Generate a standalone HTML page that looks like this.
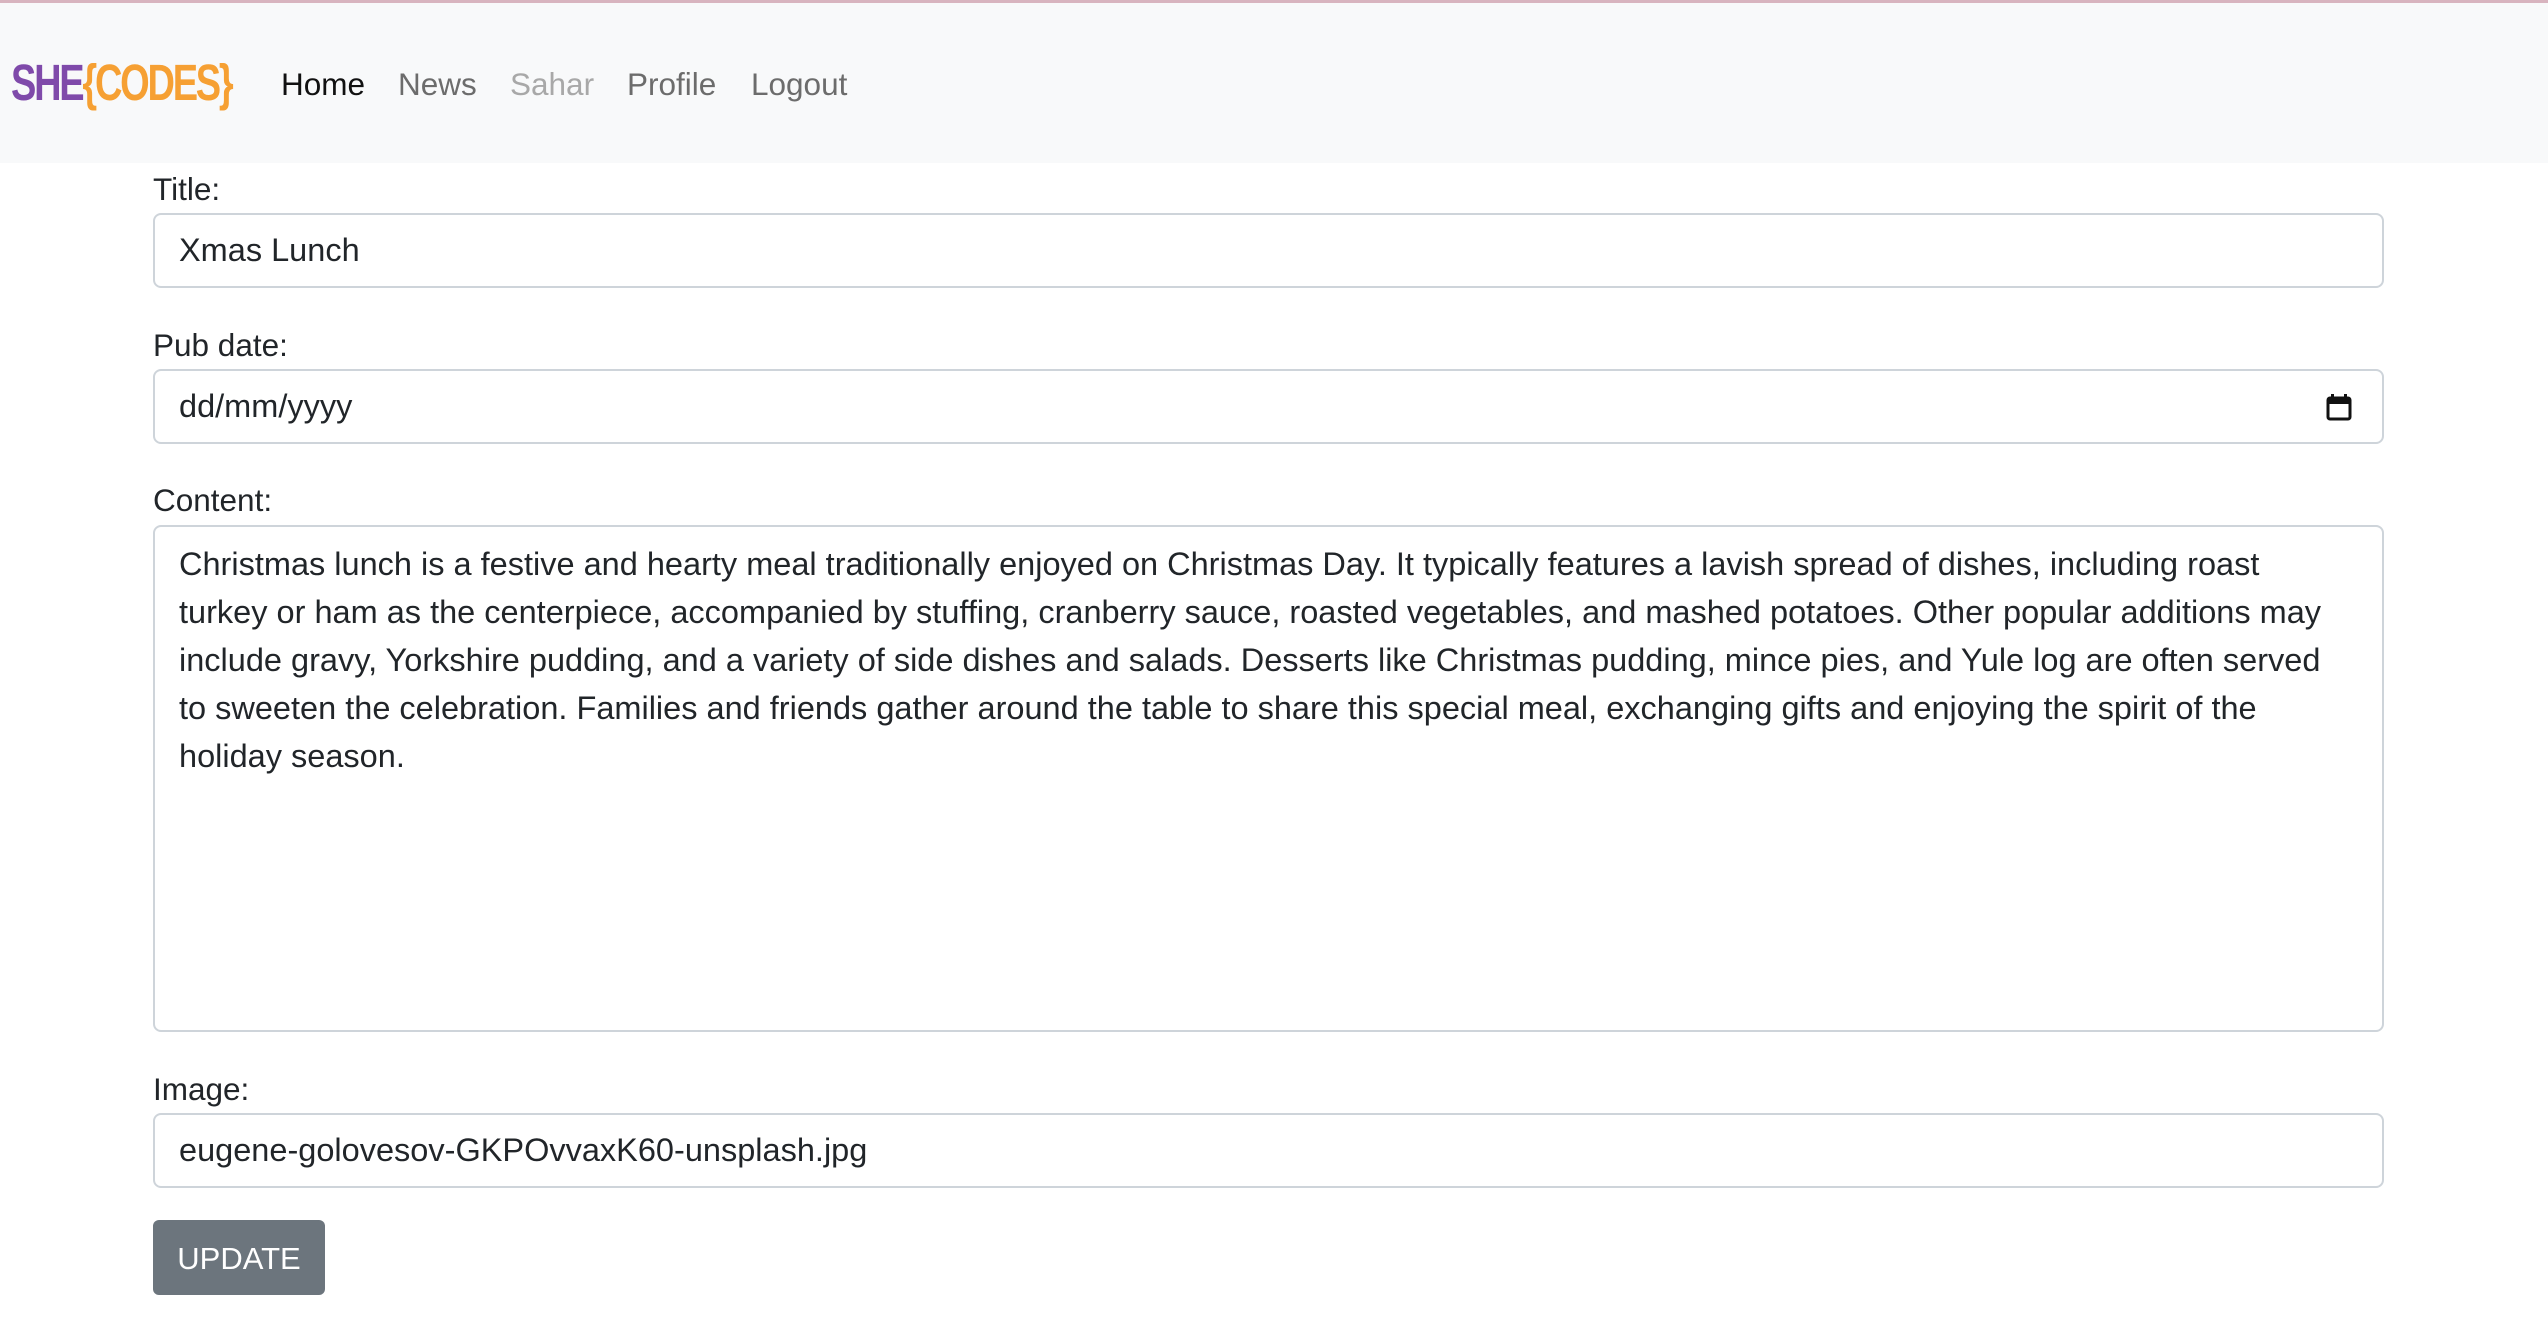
<!DOCTYPE html>
<html><head><meta charset="utf-8"><style>
*{box-sizing:border-box;margin:0;padding:0}
body{width:2548px;height:1322px;background:#fff;font-family:"Liberation Sans",sans-serif;color:#212529;position:relative;overflow:hidden}
.top{position:absolute;left:0;top:0;width:2548px;height:3px;background:#d8b4bf}
.nav{position:absolute;left:0;top:3px;width:2548px;height:160px;background:#f8f9fa}
.logo{position:absolute;left:11px;top:50px;font-family:"Liberation Sans",sans-serif;font-weight:bold;font-size:51px;letter-spacing:-3px;transform:scaleX(0.745);transform-origin:left top;white-space:nowrap}
.logo .p{color:#7f4aaa}.logo .o{color:#f6a033}
.ni{position:absolute;top:63px;font-size:31.5px;color:#6c6c6c;white-space:nowrap}
.lbl{position:absolute;left:153px;font-size:31.5px;white-space:nowrap}
.inp{position:absolute;left:153px;width:2231px;border:2px solid #ced4da;border-radius:8px;background:#fff;font-size:32.5px;padding-left:24px;white-space:nowrap}
.btn{position:absolute;left:153px;top:1220px;width:172px;height:75px;background:#6c757d;border-radius:6px;color:#fff;font-size:31px;line-height:77px;text-align:center}
</style></head><body>
<div class="top"></div>
<div class="nav">
<div class="logo"><span class="p">SHE</span><span class="o">{CODES}</span></div>
<span class="ni" style="left:281px;color:#111">Home</span>
<span class="ni" style="left:398px">News</span>
<span class="ni" style="left:510px;color:#a8a8a8">Sahar</span>
<span class="ni" style="left:627px">Profile</span>
<span class="ni" style="left:751px">Logout</span>
</div>
<div class="lbl" style="top:171px">Title:</div>
<div class="inp" style="top:213px;height:75px;line-height:71px">Xmas Lunch</div>
<div class="lbl" style="top:327px">Pub date:</div>
<div class="inp" style="top:369px;height:75px;line-height:71px">dd/mm/yyyy
<svg style="position:absolute;right:30px;top:22px" width="26" height="28" viewBox="0 0 26 28"><rect x="2" y="5" width="22" height="21" rx="2" fill="none" stroke="#111" stroke-width="3"/><rect x="2" y="5" width="22" height="6" fill="#111"/><rect x="5" y="1" width="3" height="6" fill="#111"/><rect x="18" y="1" width="3" height="6" fill="#111"/></svg></div>
<div class="lbl" style="top:482px">Content:</div>
<div class="inp" style="top:525px;height:507px;padding-top:13px;line-height:48px">Christmas lunch is a festive and hearty meal traditionally enjoyed on Christmas Day. It typically features a lavish spread of dishes, including roast<br>turkey or ham as the centerpiece, accompanied by stuffing, cranberry sauce, roasted vegetables, and mashed potatoes. Other popular additions may<br>include gravy, Yorkshire pudding, and a variety of side dishes and salads. Desserts like Christmas pudding, mince pies, and Yule log are often served<br>to sweeten the celebration. Families and friends gather around the table to share this special meal, exchanging gifts and enjoying the spirit of the<br>holiday season.</div>
<div class="lbl" style="top:1071px">Image:</div>
<div class="inp" style="top:1113px;height:75px;line-height:71px">eugene-golovesov-GKPOvvaxK60-unsplash.jpg</div>
<div class="btn">UPDATE</div>
</body></html>
